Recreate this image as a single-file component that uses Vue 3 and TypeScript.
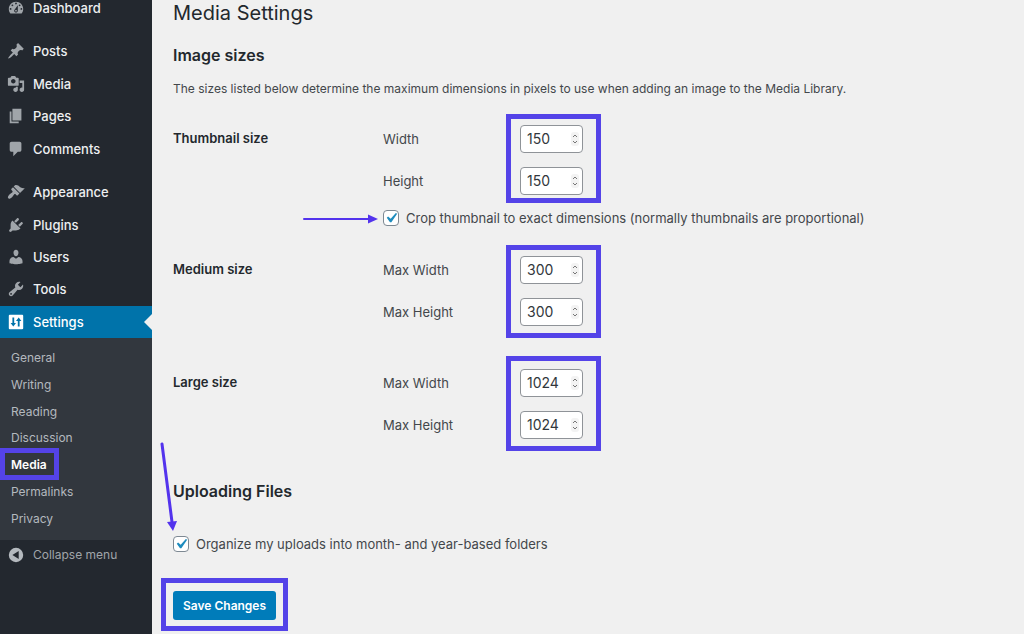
<script setup lang="ts">
import { ref } from 'vue'

interface MenuItem {
  label: string
  icon: string
  current?: boolean
}

interface SizeGroup {
  id: string
  title: string
  fields: { id: string; label: string; value: number }[]
  crop?: boolean
}

const menuGroups: MenuItem[][] = [
  [
    {
      label: 'Dashboard',
      icon: 'M3.76 16h12.48c1.1-1.37 1.76-3.11 1.76-5 0-4.42-3.58-8-8-8s-8 3.58-8 8c0 1.89.66 3.63 1.76 5zM10 4c.55 0 1 .45 1 1s-.45 1-1 1-1-.45-1-1 .45-1 1-1zM6 6c.55 0 1 .45 1 1s-.45 1-1 1-1-.45-1-1 .45-1 1-1zm8 0c.55 0 1 .45 1 1s-.45 1-1 1-1-.45-1-1 .45-1 1-1zm-5.37 5.55L12 7v6c0 1.1-.9 2-2 2s-2-.9-2-2c0-.57.24-1.08.63-1.45zM4 10c.55 0 1 .45 1 1s-.45 1-1 1-1-.45-1-1 .45-1 1-1zm12 0c.55 0 1 .45 1 1s-.45 1-1 1-1-.45-1-1 .45-1 1-1zm-5 3c0-.55-.45-1-1-1s-1 .45-1 1 .45 1 1 1 1-.45 1-1z',
    },
  ],
  [
    {
      label: 'Posts',
      icon: 'M10.44 3.02l1.82-1.82 6.36 6.35-1.83 1.82c-1.05-.68-2.48-.57-3.41.36l-.75.75c-.92.93-1.04 2.35-.35 3.41l-1.83 1.82-2.41-2.41-2.8 2.79c-.42.42-3.38 2.71-3.8 2.29s1.86-3.39 2.28-3.81l2.79-2.79L4.1 9.36l1.83-1.82c1.05.69 2.48.57 3.4-.36l.75-.75c.93-.92 1.05-2.35.36-3.41z',
    },
    {
      label: 'Media',
      icon: 'M13 11V4c0-.55-.45-1-1-1h-1.67L9 1H5L3.67 3H2c-.55 0-1 .45-1 1v7c0 .55.45 1 1 1h10c.55 0 1-.45 1-1zM7 4.5c1.38 0 2.5 1.12 2.5 2.5S8.38 9.5 7 9.5 4.5 8.38 4.5 7 5.62 4.5 7 4.5zM14 6h5v10.5c0 1.38-1.12 2.5-2.5 2.5S14 17.88 14 16.5s1.12-2.5 2.5-2.5c.17 0 .34.02.5.05V9h-3V6zm-4 8.05V13h2v3.5c0 1.38-1.12 2.5-2.5 2.5S7 17.88 7 16.5 8.12 14 9.5 14c.17 0 .34.02.5.05z',
    },
    { label: 'Pages', icon: 'M6 15V2h10v13H6zm-1 1h8v2H3V5h2v11z' },
    {
      label: 'Comments',
      icon: 'M5 2h9c1.1 0 2 .9 2 2v7c0 1.1-.9 2-2 2h-2l-5 5v-5H5c-1.1 0-2-.9-2-2V4c0-1.1.9-2 2-2z',
    },
  ],
  [
    {
      label: 'Appearance',
      icon: 'M14.48 11.06L7.41 3.99l1.5-1.5c.5-.56 2.3-.47 3.51.32 1.21.8 1.43 1.28 2.91 2.1 1.18.64 2.45 1.26 4.45.85zm-.71.71L6.7 4.7 4.93 6.47c-.39.39-.39 1.02 0 1.41l1.06 1.06c.39.39.39 1.03 0 1.42-.6.6-1.43 1.11-2.21 1.69-.35.26-.7.53-1.01.84C1.43 14.23.4 16.08 1.4 17.07c.99 1 2.84-.03 4.18-1.36.31-.31.58-.66.85-1.02.57-.78 1.08-1.61 1.69-2.21.39-.39 1.02-.39 1.41 0l1.06 1.06c.39.39 1.02.39 1.41 0z',
    },
    {
      label: 'Plugins',
      icon: 'M13.11 4.36L9.87 7.6 8 5.73l3.24-3.24c.35-.34 1.05-.2 1.56.32.52.51.66 1.21.31 1.55zm-8 1.77l.91-1.12 9.01 9.01-1.19.84c-.71.71-2.63 1.16-3.82 1.16H6.14L4.9 17.26c-.59.59-1.54.59-2.12 0-.59-.58-.59-1.53 0-2.12l1.24-1.24v-3.88c0-1.13.4-3.19 1.09-3.89zm7.26 3.97l3.24-3.24c.34-.35 1.04-.21 1.55.31.52.51.66 1.21.31 1.55l-3.24 3.25z',
    },
    {
      label: 'Users',
      icon: 'M10 9.25c-2.27 0-2.73-3.44-2.73-3.44C7 4.02 7.82 2 9.97 2c2.16 0 2.98 2.02 2.71 3.81 0 0-.41 3.44-2.68 3.44zm0 2.57L12.72 10c2.39 0 4.52 2.33 4.52 4.53v2.49s-3.65 1.13-7.24 1.13c-3.65 0-7.24-1.13-7.24-1.13v-2.49c0-2.25 1.94-4.48 4.47-4.48z',
    },
    {
      label: 'Tools',
      icon: 'M16.68 9.77c-1.34 1.34-3.3 1.67-4.95.99l-5.41 6.52c-.99.99-2.59.99-3.58 0s-.99-2.59 0-3.57l6.52-5.42c-.68-1.65-.35-3.61.99-4.95 1.28-1.28 3.12-1.62 4.72-1.06l-2.89 2.89 2.82 2.82 2.86-2.87c.53 1.58.18 3.39-1.08 4.65zM3.81 16.21c.4.39 1.04.39 1.43 0 .4-.4.4-1.04 0-1.43-.39-.4-1.03-.4-1.43 0-.39.39-.39 1.03 0 1.43z',
    },
    {
      label: 'Settings',
      icon: 'M18 17V3c0-.55-.45-1-1-1H3c-.55 0-1 .45-1 1v14c0 .55.45 1 1 1h14c.55 0 1-.45 1-1zM6 5h2v6h2l-3 4-3-4h2zM12 15V9h-2l3-4 3 4h-2v6z',
      current: true,
    },
  ],
]

const submenu: string[] = ['General', 'Writing', 'Reading', 'Discussion', 'Media', 'Permalinks', 'Privacy']

const sizes = ref<SizeGroup[]>([
  {
    id: 'thumbnail',
    title: 'Thumbnail size',
    fields: [
      { id: 'thumbnail-w', label: 'Width', value: 150 },
      { id: 'thumbnail-h', label: 'Height', value: 150 },
    ],
    crop: true,
  },
  {
    id: 'medium',
    title: 'Medium size',
    fields: [
      { id: 'medium-w', label: 'Max Width', value: 300 },
      { id: 'medium-h', label: 'Max Height', value: 300 },
    ],
  },
  {
    id: 'large',
    title: 'Large size',
    fields: [
      { id: 'large-w', label: 'Max Width', value: 1024 },
      { id: 'large-h', label: 'Max Height', value: 1024 },
    ],
  },
])

const crop = ref(true)
const organize = ref(true)
const tick = 'M14.83 4.89l1.34.94-5.81 8.38H9.02L5.78 9.67l1.34-1.25 2.57 2.4z'
</script>

<template>
  <div class="admin">
    <nav class="sidebar" aria-label="Main menu">
      <ul v-for="(group, g) in menuGroups" :key="g" class="menu" :class="'menu-' + group.length">
        <li v-for="item in group" :key="item.label">
          <a href="#" class="menu-link" :class="{ current: item.current }">
            <svg viewBox="0 0 20 20" aria-hidden="true"><path :d="item.icon" fill-rule="evenodd" /></svg>
            {{ item.label }}
          </a>
        </li>
      </ul>
      <ul class="submenu">
        <li v-for="name in submenu" :key="name">
          <a href="#" :class="{ active: name === 'Media' }">{{ name }}</a>
        </li>
      </ul>
      <button type="button" class="collapse">
        <svg viewBox="0 0 20 20" aria-hidden="true">
          <path fill-rule="evenodd" d="M10 2a8 8 0 1 1 0 16 8 8 0 0 1 0-16zM13 5.500L6 10l7 4.500z" />
        </svg>
        Collapse menu
      </button>
    </nav>

    <main class="content">
      <h1>Media Settings</h1>
      <form @submit.prevent>
        <h2>Image sizes</h2>
        <p class="intro">
          The sizes listed below determine the maximum dimensions in pixels to use when adding an image to the Media
          Library.
        </p>

        <section v-for="size in sizes" :key="size.id" class="size" :class="size.id">
          <h3>{{ size.title }}</h3>
          <div>
            <div class="fields">
              <div v-for="field in size.fields" :key="field.id" class="field">
                <label :for="field.id">{{ field.label }}</label>
                <span class="number">
                  <input :id="field.id" v-model="field.value" type="number" min="0" />
                  <svg viewBox="0 0 8 14" aria-hidden="true">
                    <rect width="8" height="14" rx="3" />
                    <path d="M2 5l2-2L6 5M2 9l2 2L6 9" />
                  </svg>
                </span>
              </div>
            </div>
            <div v-if="size.crop" class="option crop">
              <span class="check">
                <input id="crop" v-model="crop" type="checkbox" />
                <svg v-if="crop" viewBox="0 0 20 20" aria-hidden="true"><path :d="tick" /></svg>
              </span>
              <label for="crop">Crop thumbnail to exact dimensions (normally thumbnails are proportional)</label>
              <svg class="arrow arrow-right" viewBox="0 0 76 10" aria-hidden="true">
                <path class="shaft" d="M2 5h66" />
                <path d="M66 0.500L76 5l-10 4.500z" />
              </svg>
            </div>
          </div>
        </section>

        <h2 class="uploads">Uploading Files</h2>
        <div class="option">
          <span class="check">
            <input id="organize" v-model="organize" type="checkbox" />
            <svg v-if="organize" viewBox="0 0 20 20" aria-hidden="true"><path :d="tick" /></svg>
          </span>
          <label for="organize">Organize my uploads into month- and year-based folders</label>
          <svg class="arrow arrow-down" viewBox="0 0 18 90" aria-hidden="true">
            <path class="shaft" d="M2 2l10 78" />
            <path d="M7 80l10-1-4 10z" />
          </svg>
        </div>
        <div class="submit"><button type="submit">Save Changes</button></div>
      </form>
    </main>
  </div>
</template>

<style>
body {
  margin: 0;
  background: #f0f0f0;
}
</style>

<style scoped>
.admin {
  display: flex;
  height: 100vh;
  overflow: hidden;
  background: #f0f0f0;
  color: #43474b;
  font-family: Inter, "Liberation Sans", sans-serif;
  font-size: 13px;
  line-height: 20px;
}

ul {
  margin: 0;
  padding: 0;
  list-style: none;
}

h1,
h2,
h3,
p {
  margin: 0;
}

/* Sidebar */
.sidebar {
  flex: 0 0 152px;
  background: #23282f;
}

.menu {
  display: grid;
  grid-auto-rows: 1fr;
  margin-bottom: 11px;
}

.menu-1 {
  height: 32px;
  margin-top: -8px;
}

.menu-4 {
  height: 130px;
}

.menu-5 {
  height: 162px;
  margin-bottom: 0;
}

.menu-link {
  position: relative;
  display: flex;
  align-items: center;
  gap: 8px;
  height: 100%;
  padding-left: 7px;
  color: #edeff1;
  font-weight: 500;
  text-decoration: none;
}

.menu-link svg,
.collapse svg {
  flex: none;
  width: 18px;
  height: 18px;
  fill: #a0a5aa;
}

.menu-link.current {
  background: #0073aa;
  color: #fff;
}

.menu-link.current svg {
  fill: #fff;
}

.menu-link.current::after {
  content: "";
  position: absolute;
  top: 50%;
  right: 0;
  margin-top: -8px;
  border: 8px solid transparent;
  border-left-width: 0;
  border-right-color: #f0f0f0;
}

.submenu {
  display: grid;
  grid-auto-rows: 1fr;
  height: 187px;
  padding: 7px 0 8px;
  background: #32373e;
}

.submenu li {
  display: flex;
  align-items: center;
}

.submenu a {
  position: relative;
  margin-left: 11px;
  color: #b4b9be;
  font-size: 12px;
  text-decoration: none;
}

.submenu .active {
  color: #fff;
  font-weight: 600;
}

.submenu .active::after {
  content: "";
  position: absolute;
  inset: -7px -12px -5px -11px;
  border: 5px solid #5443e8;
}

.collapse {
  display: flex;
  align-items: center;
  gap: 8px;
  width: 100%;
  height: 30px;
  padding: 0 0 0 7px;
  border: 0;
  background: none;
  color: #a0a5aa;
  font: inherit;
  font-size: 12px;
}

.collapse svg {
  fill: #b4b9be;
}

/* Content */
.content {
  flex: 1;
  min-width: 0;
  padding: 0 21px;
}

h1 {
  color: #23282d;
  font-size: 20px;
  font-weight: 400;
  line-height: 26px;
}

h2 {
  margin-top: 19px;
  color: #23282d;
  font-size: 16px;
  font-weight: 600;
  line-height: 20px;
}

.intro {
  margin: 14px 0 26px;
  font-size: 12px;
}

.size {
  display: grid;
  grid-template-columns: 210px 1fr;
}

.thumbnail {
  margin-bottom: 28px;
}

.medium {
  margin-bottom: 43px;
}

h3 {
  margin-top: 3px;
  color: #23282d;
  font-size: 13px;
  font-weight: 600;
}

.fields {
  position: relative;
  display: grid;
  gap: 14px;
}

.fields::after {
  content: "";
  position: absolute;
  box-sizing: border-box;
  inset: -11px auto -12px 123px;
  width: 95px;
  border: 5px solid #5443e8;
  pointer-events: none;
}

.thumbnail .fields::after {
  bottom: -8px;
}

.large .fields::after {
  top: -13px;
}

.field {
  display: grid;
  grid-template-columns: 137px 63px;
  align-items: center;
}

.number {
  position: relative;
  display: flex;
}

.number input {
  box-sizing: border-box;
  width: 100%;
  height: 28px;
  margin: 0;
  padding: 0 18px 1px 6px;
  border: 1px solid #8f9398;
  border-radius: 4px;
  background: #fff;
  color: #32373c;
  font: inherit;
  font-size: 14px;
  appearance: textfield;
}

.number input::-webkit-inner-spin-button {
  appearance: none;
  margin: 0;
}

.number svg {
  position: absolute;
  top: 7px;
  right: 4px;
  width: 8px;
  height: 14px;
  pointer-events: none;
}

.number rect {
  fill: #f3f3f3;
}

.number path {
  fill: none;
  stroke: #777;
}

.option {
  position: relative;
  display: flex;
  align-items: center;
  gap: 7px;
}

.crop {
  margin-top: 13px;
}

.check {
  position: relative;
  display: flex;
}

.check input {
  box-sizing: border-box;
  width: 16px;
  height: 16px;
  margin: 0;
  border: 1px solid #7e8993;
  border-radius: 4px;
  background: #fff;
  appearance: none;
}

.check svg {
  position: absolute;
  inset: -2px;
  width: 20px;
  height: 20px;
  fill: #1e8cbe;
  pointer-events: none;
}

.arrow {
  position: absolute;
  fill: #5333ed;
}

.shaft {
  fill: none;
  stroke: #5333ed;
  stroke-width: 2;
  stroke-linecap: round;
}

.arrow-right {
  top: 6px;
  right: calc(100% + 5px);
  width: 76px;
  height: 10px;
}

.arrow-down {
  bottom: 22px;
  left: -13px;
  width: 18px;
  height: 90px;
}

.arrow-down .shaft {
  stroke-width: 3;
}

.uploads {
  margin: 42px 0 33px;
}

.submit {
  position: relative;
  display: inline-block;
  margin-top: 37px;
}

.submit::after {
  content: "";
  position: absolute;
  inset: -13px -12px -11px;
  border: 5px solid #5443e8;
  pointer-events: none;
}

.submit button {
  display: block;
  height: 29px;
  padding: 0 10px;
  border: 0;
  border-radius: 3px;
  background: #007cba;
  color: #fff;
  font: inherit;
  font-size: 12px;
  font-weight: 600;
}
</style>
